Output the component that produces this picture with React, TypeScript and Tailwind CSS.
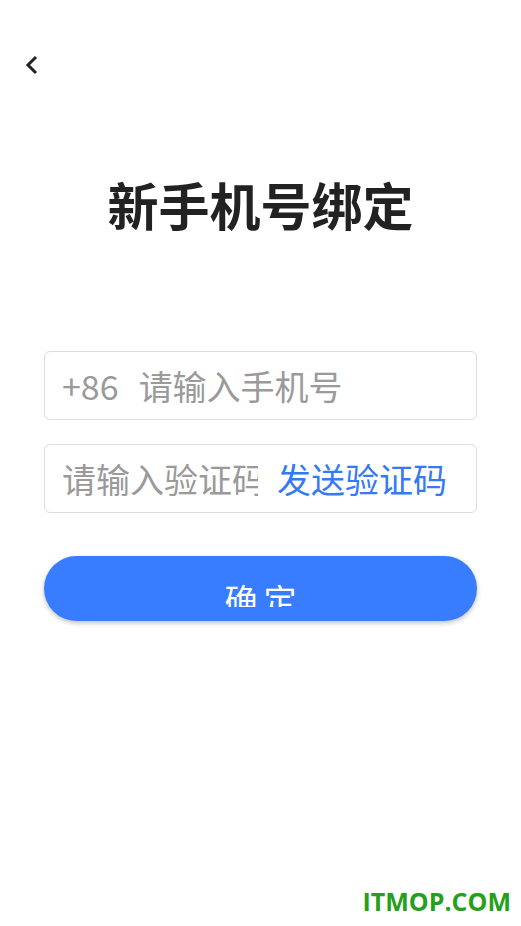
import React from 'react';

const CJK = '"Noto Sans CJK SC", "Noto Sans", sans-serif';

export default function App() {
  return (
    <div className="relative w-full h-[926px] bg-white flex flex-col overflow-hidden" style={{ fontFamily: CJK }}>
      {/* back */}
      <div className="pt-[55px] pl-[25px] h-[75px]">
        <svg width="14" height="20" viewBox="0 0 14 20" fill="none">
          <path d="M11 2 L3 10 L11 18" stroke="#222" strokeWidth="3" strokeLinecap="butt" strokeLinejoin="miter" />
        </svg>
      </div>

      <h1 className="mt-[104px] text-center text-[51px] leading-[50px] font-bold text-[#222]">新手机号绑定</h1>

      <div className="mt-[122px] mx-[44px] flex flex-col">
        <div className="h-[69px] rounded-[6px] border border-[#dcdcdc] flex items-center pl-[17px] text-[34px] text-[#9a9a9a]">
          <span>+86</span>
          <span className="ml-[20px]">请输入手机号</span>
        </div>

        <div className="mt-[24px] h-[69px] rounded-[6px] border border-[#dcdcdc] flex items-center pl-[17px] pr-[29px] text-[34px]">
          <span className="w-[196px] overflow-hidden whitespace-nowrap text-[#9a9a9a]">请输入验证码</span>
          <span className="ml-auto text-[#3579f6]">发送验证码</span>
        </div>

        <button className="mt-[43px] h-[65px] rounded-full bg-[#387dff] shadow-[0_2px_5px_rgba(0,0,0,0.25)] flex items-center justify-center">
          <span className="h-[30px] overflow-hidden text-white text-[33px] leading-[44px] tracking-[6px] pl-[6px] flex items-start mt-[6px]">确定</span>
        </button>
      </div>

      <div className="absolute right-[10px] bottom-[6px] text-[25px] font-bold text-[#25a01b]" style={{ fontFamily: '"Open Sans", sans-serif' }}>
        ITMOP.COM
      </div>
    </div>
  );
}
